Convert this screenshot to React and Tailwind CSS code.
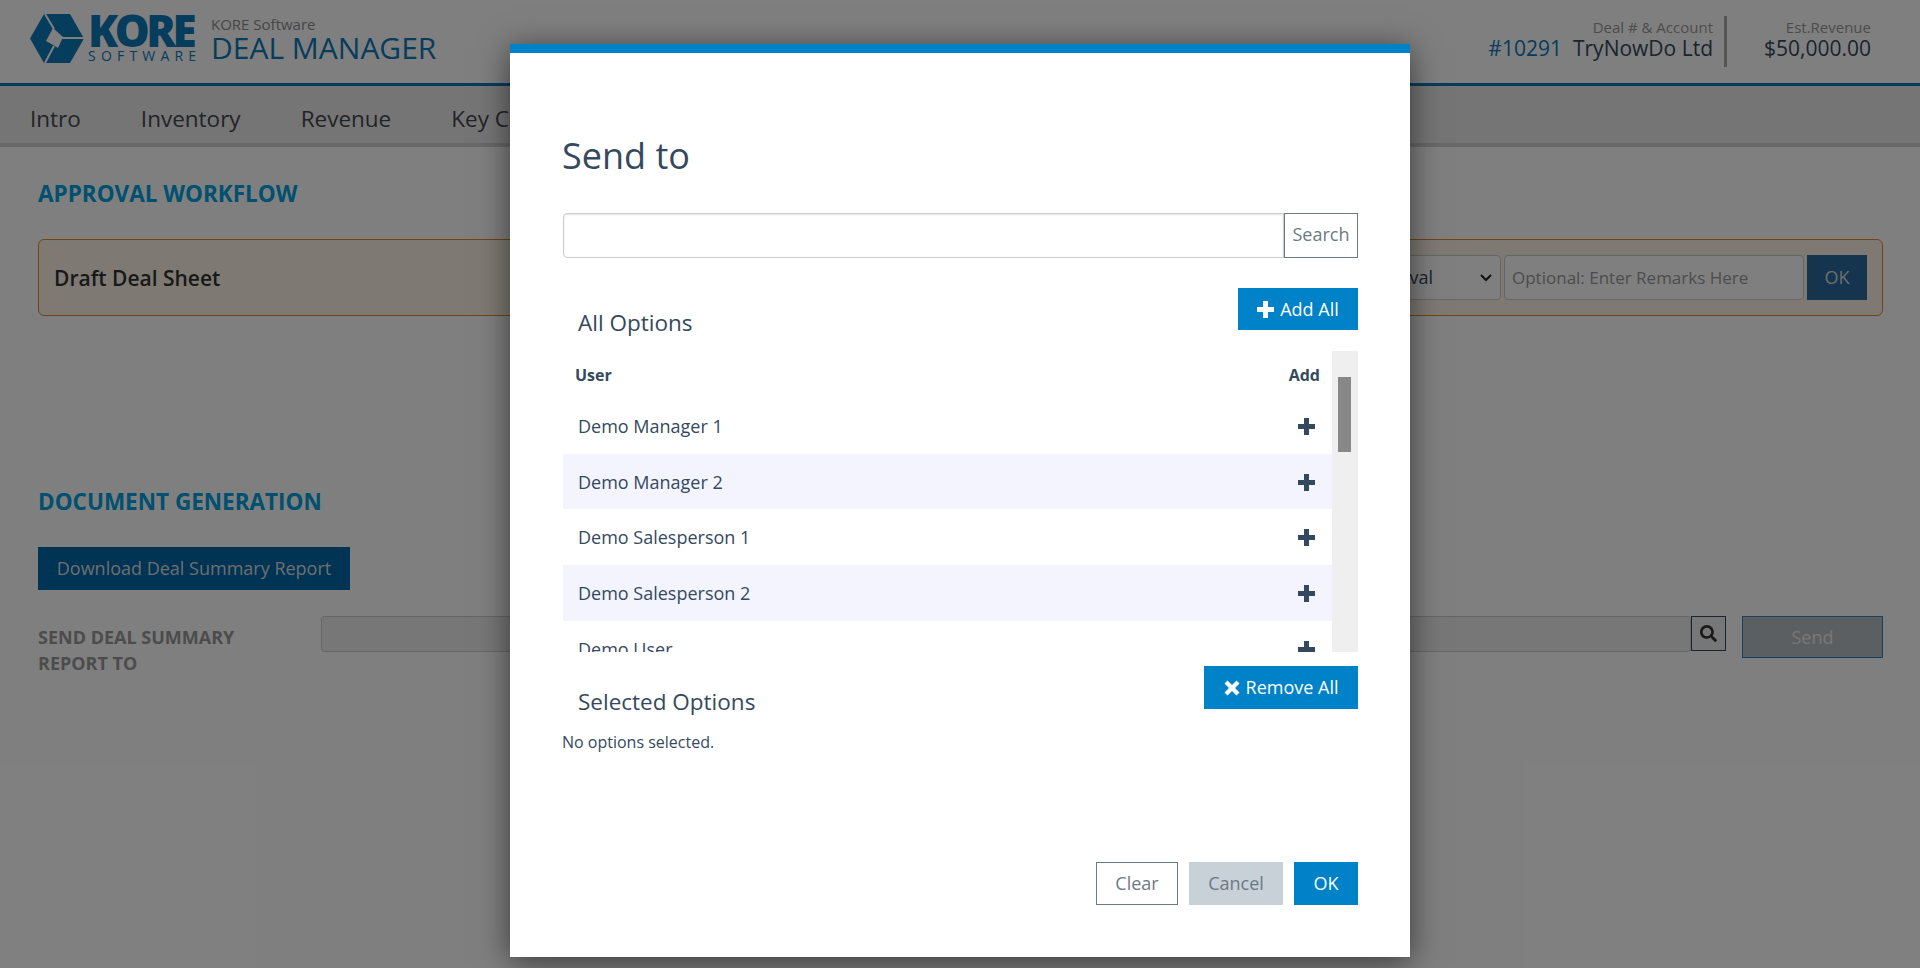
import React from 'react';
import { FaSearch } from 'react-icons/fa';

const users = ['Demo Manager 1', 'Demo Manager 2', 'Demo Salesperson 1', 'Demo Salesperson 2', 'Demo User'];

// blocky plus, heavier than the icon package ones
const PlusIcon = ({ color = '#34495e' }) => (
    <svg width="17" height="17" viewBox="0 0 17 17" className="shrink-0">
        <path d="M6 0 H11 V6 H17 V11 H11 V17 H6 V11 H0 V6 H6 Z" fill={color} />
    </svg>
);

const RemoveIcon = () => (
    <svg width="16" height="16" viewBox="0 0 16 16" className="shrink-0">
        <path d="M3.5 0.5 L8 5 L12.5 0.5 L15.5 3.5 L11 8 L15.5 12.5 L12.5 15.5 L8 11 L3.5 15.5 L0.5 12.5 L5 8 L0.5 3.5 Z" fill="#fff" />
    </svg>
);

const Logo = () => (
    <div className="flex items-start h-[49px]">
        <svg width="54" height="49" viewBox="0 0 54 49" className="shrink-0">
            <path d="M0 24.5 L14 0 L40 0 L54 24.5 L40 49 L14 49 Z" fill="#0c78b8" />
            <path d="M15 0 L24 15 M54 24 L32 24 M15 49 L24 32" stroke="#fff" strokeWidth="2" fill="none" />
            <path d="M23 14 L33 23 L28 34 L23 31 L16 27 Z" fill="#fff" />
        </svg>
        <div className="ml-[4px] w-[108px] flex flex-col -mt-[2px]">
            <span className="text-[44px] font-extrabold leading-[36px] tracking-[-3.5px] text-[#0c78b8]">KORE</span>
            <span className="mt-[1px] text-[14px] leading-[14px] tracking-[5.2px] text-[#0c78b8]">SOFTWARE</span>
        </div>
    </div>
);

const Page = () => (
    <div className="min-h-[968px] bg-white font-['Open_Sans',sans-serif]">
        {/* Header */}
        <header className="flex items-start justify-between h-[83px] pl-[30px] pr-[49px] border-b-[3px] border-[#0c78b8] box-content">
            <div className="flex items-start pt-[14px]">
                <Logo />
                <div className="ml-[15px] flex flex-col mt-[1px]">
                    <span className="text-[15px] leading-[18px] text-[#8d8d8d]">KORE Software</span>
                    <span className="text-[30px] leading-[30px] text-[#0c78b8]">DEAL MANAGER</span>
                </div>
            </div>
            <div className="flex items-start pt-[16px]">
                <div className="flex flex-col items-end pr-[11px] pt-[1px]">
                    <span className="text-[15px] leading-[20px] text-[#999]">Deal # &amp; Account</span>
                    <div className="flex gap-[11px] text-[21px] leading-[22px]">
                        <span className="text-[#0c78b8]">#10291</span>
                        <span className="text-[#34495e]">TryNowDo Ltd</span>
                    </div>
                </div>
                <div className="w-[3px] h-[51px] bg-[#aaa]" />
                <div className="flex flex-col items-end pl-[37px] pt-[1px]">
                    <span className="text-[15px] leading-[20px] text-[#999]">Est.Revenue</span>
                    <span className="text-[21px] leading-[22px] text-[#34495e]">$50,000.00</span>
                </div>
            </div>
        </header>

        {/* Nav */}
        <nav className="flex items-center gap-[60px] h-[61px] pl-[30px] pt-[8px] bg-[#ebebeb] border-b-[4px] border-[#d0d0d0] text-[22.5px] text-[#44484f]">
            <span>Intro</span>
            <span>Inventory</span>
            <span>Revenue</span>
            <span>Key Contacts</span>
        </nav>

        <main className="pl-[38px] pr-[37px] pt-[32px]">
            <h2 className="text-[22.5px] leading-[30px] font-bold text-[#00a0e0]">APPROVAL WORKFLOW</h2>

            <div className="mt-[30px] flex items-center justify-between h-[77px] pl-[15px] pr-[15px] border border-[#e08a20] rounded-[6px] bg-[#fdf3e6]">
                <span className="mt-[2px] text-[21px] font-semibold text-[#333]">Draft Deal Sheet</span>
                <div className="flex items-center gap-[3px]">
                    <div className="flex items-center justify-end w-[200px] h-[45px] pr-[8px] bg-white border border-[#ccc] rounded-[4px] text-[18px] text-[#34495e]">
                        <span className="mr-[47px] whitespace-nowrap">Send for Approval</span>
                        <svg width="12" height="8" viewBox="0 0 12 8" className="shrink-0">
                            <path d="M1 1 L6 6 L11 1" stroke="#222" strokeWidth="2" fill="none" />
                        </svg>
                    </div>
                    <div className="w-[300px] h-[45px] flex items-center px-[7px] bg-white border border-[#ccc] rounded-[4px] text-[17px] text-[#999]">
                        Optional: Enter Remarks Here
                    </div>
                    <button className="w-[60px] h-[45px] bg-[#2a6a9e] text-[18px] text-[#ddd]">OK</button>
                </div>
            </div>

            <h2 className="mt-[171px] text-[22.5px] leading-[30px] font-bold text-[#00a0e0]">DOCUMENT GENERATION</h2>

            <button className="mt-[30px] block w-[312px] h-[43px] bg-[#0068a8] text-[18px] text-[#ddd]">Download Deal Summary Report</button>

            <div className="mt-[26px] flex items-start">
                <div className="w-[283px] pt-[8px] text-[18px] leading-[26px] font-bold text-[#999]">SEND DEAL SUMMARY<br />REPORT TO</div>
                <div className="flex-1 h-[36px] bg-[#eee] border border-[#ccc] rounded-[3px]" />
                <button className="w-[35px] h-[35px] flex items-center justify-center border border-[#34495e] bg-[#eee] text-[#333]"><FaSearch size={17} /></button>
                <button className="ml-[16px] w-[141px] h-[42px] bg-[#b8bec4] border border-[#3480c0] text-[18px] text-[#eee]">Send</button>
            </div>
        </main>
    </div>
);

const Modal = () => (
    <div className="absolute left-[510px] top-[44px] w-[900px] h-[913px] bg-white border-t-[9px] border-[#0082c8] shadow-[0_5px_30px_rgba(0,0,0,0.55)] pl-[53px] pr-[52px] pt-[81px] font-['Open_Sans',sans-serif] text-[#34495e] flex flex-col">
        <h1 className="-ml-[1px] text-[36px] leading-[44px] h-[44px]">Send to</h1>

        <div className="mt-[35px] flex h-[45px]">
            <input className="flex-1 border border-[#ccc] rounded-l-[4px] shadow-[inset_0_1px_2px_rgba(0,0,0,0.1)]" />
            <button className="w-[74px] pb-[2px] border border-[#6c7a86] text-[18px] text-[#6c7a86]">Search</button>
        </div>

        <div className="mt-[30px] flex justify-between items-start h-[63px]">
            <span className="ml-[15px] mt-[20px] text-[22.5px] leading-[30px]">All Options</span>
            <button className="flex items-center gap-[6px] justify-center w-[120px] h-[42px] bg-[#0082c8] text-[18px] text-white"><PlusIcon color="#fff" />Add All</button>
        </div>

        <div className="flex h-[301px]">
            <div className="flex-1 overflow-hidden">
                <div className="flex justify-between items-center h-[47px] pl-[12px] pr-[12px] text-[16px] font-bold">
                    <span>User</span>
                    <span>Add</span>
                </div>
                {users.map((name, i) => (
                    <div key={name} className={`flex justify-between items-center h-[55.7px] pt-[1px] pl-[15px] pr-[17px] text-[18px] ${i % 2 === 1 ? 'bg-[#f3f4fd]' : ''}`}>
                        <span>{name}</span>
                        <PlusIcon />
                    </div>
                ))}
            </div>
            <div className="w-[26px] bg-[#efefef] pt-[26px] pl-[6px]">
                <div className="w-[13px] h-[75px] bg-[#888]" />
            </div>
        </div>

        <div className="mt-[14px] flex justify-between items-start h-[64px]">
            <span className="ml-[15px] mt-[21px] text-[22.5px] leading-[30px]">Selected Options</span>
            <button className="flex items-center gap-[6px] justify-center w-[154px] h-[43px] bg-[#0082c8] text-[18px] text-white"><RemoveIcon />Remove All</button>
        </div>
        <p className="-ml-[1px] text-[16px] leading-[24px]">No options selected.</p>

        <div className="mt-[108px] flex justify-end gap-[11px]">
            <button className="w-[82px] h-[43px] border border-[#6c7a86] text-[18px] text-[#6c7a86]">Clear</button>
            <button className="w-[94px] h-[43px] bg-[#c8d0d8] text-[18px] text-[#6c7a86]">Cancel</button>
            <button className="w-[64px] h-[43px] bg-[#0082c8] text-[18px] text-white">OK</button>
        </div>
    </div>
);

const App = () => (
    <div className="relative h-[968px] overflow-hidden">
        <Page />
        <div className="absolute inset-0 bg-black/50" />
        <Modal />
    </div>
);

export default App;
